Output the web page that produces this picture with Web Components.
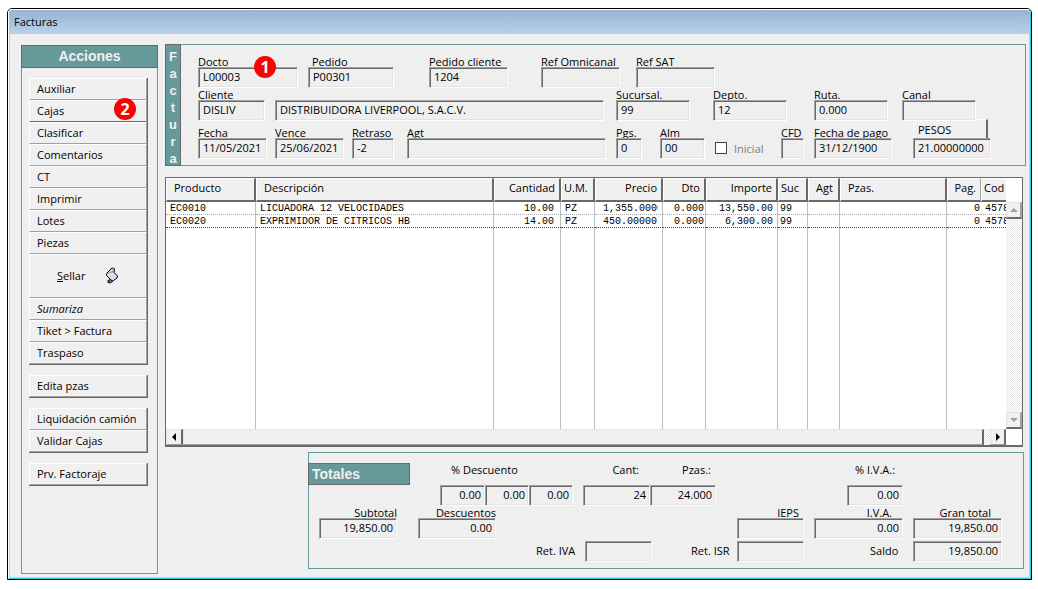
<!DOCTYPE html>
<html lang="es">
<head>
<meta charset="utf-8">
<title>Facturas</title>
<style>
  body {
    margin: 8px 6px 9px 7px;
    background: #fff;
    color: #000;
    font: 11px/15px "Open Sans", "Noto Sans", sans-serif;
    --face: #efefef;
    --teal: #669999;
    --shade: #a0a0a0;
    --dark: #696969;
  }
</style>
</head>
<body>
<erp-window>
  <span slot="title">Facturas</span>
  <erp-actions slot="side"></erp-actions>
  <erp-invoice></erp-invoice>
  <erp-lines></erp-lines>
  <erp-totals></erp-totals>
</erp-window>

<script>
const define = (name, html, setup) => {
  const template = document.createElement('template');
  template.innerHTML = html;
  customElements.define(name, class extends HTMLElement {
    constructor() {
      super();
      this.attachShadow({ mode: 'open' }).append(template.content.cloneNode(true));
    }
    connectedCallback() {
      if (setup) setup(this, this.shadowRoot);
    }
  });
};

/* Window frame with a title bar, an action column and the main column */
define('erp-window', `
  <style>
    :host { display: block; border: 1px solid #000; border-radius: 5px 5px 0 0; background: #fff; overflow: hidden; }
    .frame { border: 1px solid #fff; border-right-color: #2fd0ee; border-bottom-color: #2fd0ee; border-radius: 4px 4px 0 0; overflow: hidden; }
    h1 { margin: 0; padding: 0 5px; font: inherit; line-height: 24px; background: linear-gradient(#98b4d2, #b9d1ea); }
    .body { border: solid #b9d1ea; border-width: 0 1px 1px; background: var(--face); padding: 10px 3px 3px 11px;
      display: grid; grid-template-columns: 137px minmax(0, 1fr); column-gap: 7px; }
    aside { display: grid; padding-top: 1px; }
    main { padding-bottom: 5px; }
  </style>
  <div class="frame">
    <h1><slot name="title"></slot></h1>
    <div class="body"><aside><slot name="side"></slot></aside><main><slot></slot></main></div>
  </div>`);

/* Numbered marker laid over a control */
define('erp-badge', `
  <style>
    :host { position: absolute; display: grid; place-items: center; width: 22px; height: 22px; border-radius: 50%;
      background: #f80404; color: #fff; font: bold 16px/22px "Open Sans", sans-serif; z-index: 1; }
  </style><slot></slot>`);

/* Push button of the action column */
define('erp-action', `
  <style>
    :host { display: block; position: relative; }
    button { display: flex; align-items: center; box-sizing: border-box; width: 100%; height: 22px; padding: 0 0 2px 7px;
      border: 1px solid #fff; border-right-color: var(--shade); border-bottom-color: var(--shade); background: #f0f0f0;
      color: inherit; font: inherit; text-align: left; white-space: nowrap; }
    :host([tall]) button { height: 44px; padding-left: 27px; gap: 20px; }
    :host([italic]) button { font-style: italic; }
    :host([current]) button { border-bottom-color: var(--dark); }
    ::slotted(erp-badge) { right: 11px; top: -2px; }
  </style>
  <button type="button"><slot></slot></button><slot name="badge"></slot>`);

define('erp-actions', `
  <style>
    :host { display: block; border: 1px solid var(--teal); box-sizing: border-box; }
    h2 { margin: -1px -1px 10px; height: 21px; border: 1px solid var(--dark); background: var(--teal); color: #f0f0f0;
      font: bold 14px/21px "Liberation Sans", Arial, sans-serif; text-align: center; }
    .group { margin: 0 9px 10px 7px; border: solid var(--dark); border-width: 0 1px 1px 0; }
    svg { display: block; width: 14px; height: 17px; }
  </style>
  <h2>Acciones</h2>
  <div class="group">
    <erp-action>Auxiliar</erp-action>
    <erp-action current>Cajas<erp-badge slot="badge">2</erp-badge></erp-action>
    <erp-action>Clasificar</erp-action>
    <erp-action>Comentarios</erp-action>
    <erp-action>CT</erp-action>
    <erp-action>Imprimir</erp-action>
    <erp-action>Lotes</erp-action>
    <erp-action>Piezas</erp-action>
    <erp-action tall><span><u>S</u>ellar</span>
      <svg viewBox="0 0 14 17" aria-hidden="true">
        <path d="M6 1.500L8.500 1L9.500 2L9 5.500L12.500 9L12 11L7 14.500L5.500 12.500L1.500 8.500L2 6L5 3Z" fill="#dcdcf2"/>
        <path d="M2 6L5.500 6.500L8.500 5L9.500 2L7 4L4.500 5Z" fill="#a8a8a8"/>
        <path d="M6 1.500L8.500 1L9.500 2L9 5.500L12.500 9L12 11L7 14.500M6 1.500L5 3L2 6L1.500 8.500L5.500 12.500" fill="none" stroke="#000"/>
        <path d="M5.500 12.500L3 13.500L3 15.500L5.500 16L7.500 14Z" fill="#777" stroke="#000"/>
      </svg></erp-action>
    <erp-action italic>Sumariza</erp-action>
    <erp-action>Tiket &gt; Factura</erp-action>
    <erp-action>Traspaso</erp-action>
  </div>
  <div class="group"><erp-action>Edita pzas</erp-action></div>
  <div class="group"><erp-action>Liquidación camión</erp-action><erp-action>Validar Cajas</erp-action></div>
  <div class="group"><erp-action>Prv. Factoraje</erp-action></div>`);

/* Sunken text box with its label; attributes: value, end, inline, spaced, name */
define('erp-field', `
  <style>
    :host { display: flex; flex-direction: column; position: relative; min-width: 0; }
    label { height: 15px; line-height: 13px; white-space: nowrap; }
    input { display: block; box-sizing: border-box; width: 100%; height: 21px; margin: -3px 0 0; padding: 0 3px 2px 4px;
      border: 1px solid #fff; border-top-color: var(--shade); border-left-color: var(--shade); border-radius: 0; outline: 0;
      box-shadow: inset 1px 1px var(--dark), inset -1px -1px #e3e3e3; background: var(--face); position: relative;
      color: inherit; font: inherit; }
    :host([end]) label { text-align: right; padding-right: var(--inset, 0); }
    :host([end]) input, :host([spaced]) input, :host([inline]) input { text-align: right; }
    :host([spaced]) input { margin-top: 7px; }
    :host([center]) label { text-align: center; }
    :host([inline]) { flex-direction: row; align-items: center; }
    :host([inline]) label { flex: 1; }
    :host([inline]) input { width: var(--box, 67px); margin: 0; }
    ::slotted(erp-badge) { left: 56px; top: 1px; }
  </style>
  <label for="box"><slot></slot></label><input id="box" readonly><slot name="badge"></slot>`,
  (host, root) => {
    const box = root.getElementById('box');
    box.value = host.getAttribute('value') || '';
    if (host.getAttribute('name')) box.setAttribute('aria-label', host.getAttribute('name'));
  });

/* Invoice header */
define('erp-invoice', `
  <style>
    :host { display: grid; grid-template-columns: 16px minmax(0, 1fr); border: 1px solid var(--teal); box-sizing: border-box; }
    h2 { margin: -1px 0 -1px -1px; padding-top: 3px; border: 1px solid var(--dark); background: var(--teal); color: #f0f0f0;
      font: bold 13px/17px "Liberation Sans", Arial, sans-serif; text-align: center; width: 14px; height: 117px; overflow: hidden; }
    h2 span { display: block; }
    form { padding: 10px 34px 6px 16px; }
    .row { display: grid; align-items: end; }
    .r1 { grid-template-columns: 100fr 10fr 86fr 35fr 79fr 33fr 79fr 16fr 79fr 276fr; }
    .r2 { grid-template-columns: 67fr 10fr 329fr 12fr 74fr 23fr 74fr 27fr 74fr 14fr 74fr 15fr; }
    .r3 { grid-template-columns: 69fr 8fr 69fr 8fr 42fr 13fr 199fr 10fr 26fr 18fr 45fr 10fr 50fr 16fr 23fr 10fr 78fr 21fr 78fr; padding-top: 5px; }
    .row > :nth-child(n) { min-width: 0; }
    .lead { padding-left: 4px; }
    .check { display: flex; align-items: center; gap: 7px; height: 21px; line-height: 17px; color: #7d7d7d; padding-bottom: 1px; box-sizing: border-box; }
    .check input { appearance: none; box-sizing: border-box; width: 12px; height: 12px; margin: 0; flex: none; border: 1px solid #444; background: #fff; }
    .rate { margin-top: -7px; }
    .rate button { display: block; box-sizing: border-box; width: calc(100% - 3px); height: 22px; padding: 0 4px 2px; text-align: left;
      border: 1px solid #fff; border-right: 2px solid var(--dark); border-bottom-color: var(--shade); background: #f0f0f0; color: inherit; font: inherit; }
    .rate erp-field { margin-top: -15px; pointer-events: none; }
  </style>
  <h2><span>F</span><span>a</span><span>c</span><span>t</span><span>u</span><span>r</span><span>a</span></h2>
  <form>
    <div class="row r1">
      <erp-field value="L00003">Docto<erp-badge slot="badge">1</erp-badge></erp-field><i></i>
      <erp-field value="P00301"><span class="lead">Pedido</span></erp-field><i></i>
      <erp-field value="1204">Pedido cliente</erp-field><i></i>
      <erp-field>Ref Omnicanal</erp-field><i></i>
      <erp-field>Ref SAT</erp-field>
    </div>
    <div class="row r2">
      <erp-field value="DISLIV">Cliente</erp-field><i></i>
      <erp-field value="DISTRIBUIDORA LIVERPOOL, S.A.C.V." name="Nombre del cliente"></erp-field><i></i>
      <erp-field value="99">Sucursal.</erp-field><i></i>
      <erp-field value="12">Depto.</erp-field><i></i>
      <erp-field value="0.000">Ruta.</erp-field><i></i>
      <erp-field>Canal</erp-field>
    </div>
    <div class="row r3">
      <erp-field value="11/05/2021">Fecha</erp-field><i></i>
      <erp-field value="25/06/2021">Vence</erp-field><i></i>
      <erp-field value="-2">Retraso</erp-field><i></i>
      <erp-field>Agt</erp-field><i></i>
      <erp-field value="0">Pgs.</erp-field><i></i>
      <erp-field value="00">Alm</erp-field><i></i>
      <label class="check"><input type="checkbox" disabled>Inicial</label><i></i>
      <erp-field>CFD</erp-field><i></i>
      <erp-field value="31/12/1900">Fecha de pago</erp-field><i></i>
      <div class="rate"><button type="button">PESOS</button><erp-field value="21.00000000" name="Tipo de cambio"></erp-field></div>
    </div>
  </form>`);

/* Invoice lines with their scroll bars */
define('erp-lines', `
  <style>
    :host { display: block; margin: 11px 3px 0 0; border: 1px solid var(--dark); border-bottom-width: 2px; background: #fff; }
    .view { display: grid; grid-template-columns: minmax(0, 1fr) 16px; }
    .clip { overflow: hidden; }
    table { width: 100%; table-layout: fixed; border-collapse: separate; border-spacing: 0; }
    th { box-sizing: border-box; height: 24px; padding: 0 4px 5px 7px; border: solid; border-width: 1px 2px 2px 1px;
      border-color: #fff var(--dark) var(--dark) #fff; background: #f0f0f0; font-weight: normal; text-align: left; white-space: nowrap;
      line-height: 15px; }
    th:nth-child(n+11) { border-right: 1px solid var(--shade); }
    th:last-child { border-right: 0; }
    th.tight { padding: 0 0 5px 2px; }
    .num { text-align: right; }
    th.num { padding: 0 4px 5px 0; }
    td { box-sizing: border-box; height: 13px; padding: 2px 4px 0; border-right: 1px solid #bdbdbd; border-bottom: 1px dotted #aaa;
      font: 10px/10px "Liberation Mono", monospace; white-space: nowrap; overflow: hidden; }
    td:nth-child(n+11) { border-right: 0; }
    tbody tr:nth-child(2) td { border-bottom-color: #444; }
    td.num { padding-right: 6px; padding-left: 0; }
    td.mid { padding-right: 4px; }
    td.close { padding-right: 1px; }
    td.cut { padding-left: 8px; padding-right: 0; }
    td.cut span { display: block; margin-right: 4px; overflow: hidden; }
    td.slim { padding-left: 2px; }
    .rest td { height: 201px; border-bottom: 0; }
    .vbar { margin-top: 24px; display: flex; flex-direction: column; justify-content: space-between; }
    .hbar { display: grid; grid-template-columns: 17px minmax(0, 1fr) 6px 16px 16px; }
    .vbar, .track { background: repeating-conic-gradient(#fff 0 25%, #e8e8e8 0 50%) 0 0 / 2px 2px; }
    button, .thumb { display: grid; place-items: center; box-sizing: border-box; height: 16px; margin: 0; padding: 0; border: 1px solid #e3e3e3;
      border-right: 2px solid var(--dark); border-bottom-color: var(--shade); background: #f0f0f0; }
    .vbar button { height: 17px; border-bottom: 2px solid var(--dark); border-right-color: var(--shade); }
    svg { display: block; width: 8px; height: 8px; }
  </style>
  <div class="view">
    <div class="clip">
      <table>
        <colgroup><col style="width:90px"><col style="width:238px"><col style="width:67px"><col style="width:34px"><col style="width:68px"><col style="width:43px"><col style="width:72px"><col style="width:30px"><col style="width:32px"><col style="width:107px"><col style="width:34px"><col style="width:25px"></colgroup>
        <thead><tr><th>Producto</th><th>Descripción</th><th class="num">Cantidad</th><th class="tight">U.M.</th><th class="num">Precio</th><th class="num">Dto</th><th class="num">Importe</th><th class="tight">Suc</th><th>Agt</th><th>Pzas.</th><th class="num">Pag.</th><th class="tight">Cod</th></tr></thead>
        <tbody>
          <tr><td>EC0010</td><td>LICUADORA 12 VELOCIDADES</td><td class="num">10.00</td><td>PZ</td><td class="cut"><span>1,355.0000</span></td><td class="num close">0.000</td><td class="num mid">13,550.00</td><td class="slim">99</td><td></td><td></td><td class="num close">0</td><td>4578</td></tr>
          <tr><td>EC0020</td><td>EXPRIMIDOR DE CITRICOS HB</td><td class="num">14.00</td><td>PZ</td><td class="cut"><span>450.00000</span></td><td class="num close">0.000</td><td class="num mid">6,300.00</td><td class="slim">99</td><td></td><td></td><td class="num close">0</td><td>4578</td></tr>
          <tr class="rest"><td></td><td></td><td></td><td></td><td></td><td></td><td></td><td></td><td></td><td></td><td></td><td></td></tr>
        </tbody>
      </table>
    </div>
    <div class="vbar">
      <button type="button" aria-label="Subir"><svg viewBox="0 0 8 8"><path d="M0 6L4 2L8 6Z" fill="#a0a0a0"/></svg></button>
      <button type="button" aria-label="Bajar"><svg viewBox="0 0 8 8"><path d="M0 2L4 6L8 2Z" fill="#a0a0a0"/></svg></button>
    </div>
  </div>
  <div class="hbar">
    <button type="button" aria-label="Izquierda"><svg viewBox="0 0 8 8"><path d="M6 0L2 4L6 8Z"/></svg></button>
    <div class="thumb"></div><div class="track"></div>
    <button type="button" aria-label="Derecha"><svg viewBox="0 0 8 8"><path d="M2 0L6 4L2 8Z"/></svg></button>
  </div>`);

/* Totals */
define('erp-totals', `
  <style>
    :host { display: block; margin: 5px 2px 0 143px; border: 1px solid var(--teal); padding: 10px 0 6px; }
    h2 { margin: 0 0 0 -1px; height: 20px; padding-left: 3px; border: 1px solid var(--dark); background: var(--teal); color: #f0f0f0;
      font: bold 14px/21px "Liberation Sans", Arial, sans-serif; }
    .row { display: grid; align-items: start; }
    .row > :nth-child(n) { min-width: 0; }
    .a { grid-template-columns: 101fr 30fr 45fr 44fr 44fr 10fr 67fr 66fr 131fr 56fr 120fr; }
    .b { grid-template-columns: 10fr 78fr 21fr 78fr 241fr 67fr 10fr 89fr 10fr 89fr 21fr; }
    .c { grid-template-columns: 227fr 116fr 39fr 113fr 66fr 132fr 21fr; padding-top: 2px; }
    .lead { padding-left: 11px; }
    .wide { --inset: 11px; }
    .some { --inset: 5px; }
    .saldo { --box: 89px; }
  </style>
  <div class="row a">
    <h2>Totales</h2><i></i>
    <erp-field spaced value="0.00"><span class="lead">% Descuento</span></erp-field>
    <erp-field spaced value="0.00" name="% Descuento 2"></erp-field>
    <erp-field spaced value="0.00" name="% Descuento 3"></erp-field><i></i>
    <erp-field spaced end class="wide" value="24">Cant:</erp-field>
    <erp-field spaced end class="some" value="24.000">Pzas.:</erp-field><i></i>
    <erp-field spaced center value="0.00">% I.V.A.:</erp-field>
  </div>
  <div class="row b">
    <i></i><erp-field end value="19,850.00">Subtotal</erp-field>
    <i></i><erp-field end value="0.00">Descuentos</erp-field>
    <i></i><erp-field end class="some">IEPS</erp-field>
    <i></i><erp-field end class="wide" value="0.00">I.V.A.</erp-field>
    <i></i><erp-field end class="wide" value="19,850.00">Gran total</erp-field>
  </div>
  <div class="row c">
    <i></i><erp-field inline>Ret. IVA</erp-field>
    <i></i><erp-field inline>Ret. ISR</erp-field>
    <i></i><erp-field inline class="saldo" value="19,850.00">Saldo</erp-field>
  </div>`);
</script>
</body>
</html>
